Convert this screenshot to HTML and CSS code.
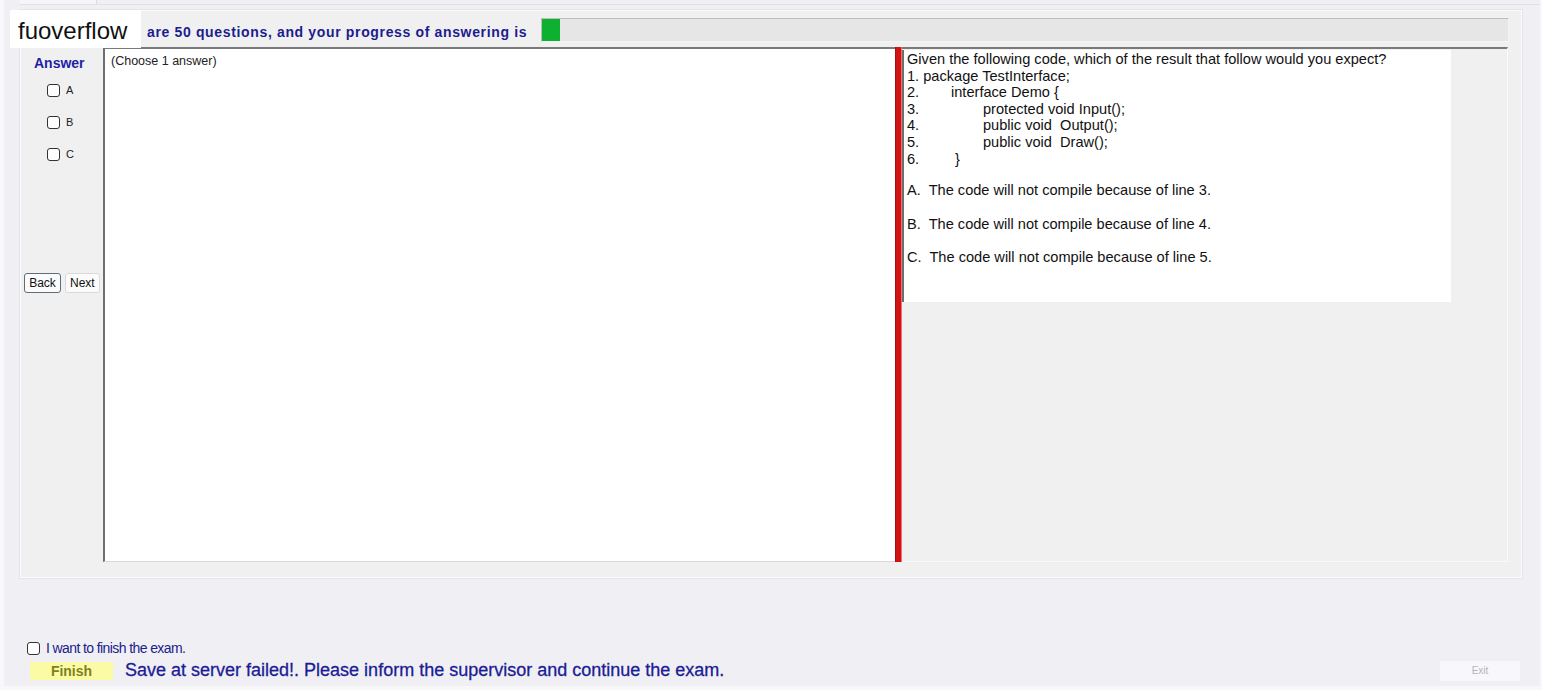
FILE: index.html
```html
<!DOCTYPE html>
<html lang="en">
<head>
  <meta charset="UTF-8" />
  <title>Exam Client</title>
  <link rel="stylesheet" href="styles.css">
</head>
<body>
  <div class="screen">
    <div class="tabstrip"><div class="tab"></div></div>

    <div class="main">
      <div class="header">
        <div class="progress-text">are 50 questions, and your progress of answering is</div>
        <div class="progress"><div class="progress-fill" style="width: 18px"></div></div>
      </div>

      <div class="body">
        <div class="answers">
          <div class="answers-title">Answer</div>
          <label class="opt"><span class="box"></span>A</label>
          <label class="opt"><span class="box"></span>B</label>
          <label class="opt"><span class="box"></span>C</label>
          <div class="nav">
            <button class="btn btn-focus">Back</button>
            <button class="btn">Next</button>
          </div>
        </div>

        <div class="question">(Choose 1 answer)</div>

        <div class="splitter"></div>

        <div class="content">
          <div class="qbox">
            <div>Given the following code, which of the result that follow would you expect?</div>
            <div>1. package TestInterface;</div>
            <div class="code"><span class="ln">2.</span><span class="ind1">interface Demo {</span></div>
            <div class="code"><span class="ln">3.</span><span class="ind2">protected void Input();</span></div>
            <div class="code"><span class="ln">4.</span><span class="ind2">public void&nbsp; Output();</span></div>
            <div class="code"><span class="ln">5.</span><span class="ind2">public void&nbsp; Draw();</span></div>
            <div class="code"><span class="ln">6.</span><span class="ind3">}</span></div>
            <p class="choice">A.&nbsp; The code will not compile because of line 3.</p>
            <p class="choice">B.&nbsp; The code will not compile because of line 4.</p>
            <p class="choice">C.&nbsp; The code will not compile because of line 5.</p>
          </div>
        </div>
      </div>
    </div>

    <div class="footer">
      <label class="finish-check"><span class="box"></span>I want to finish the exam.</label>
      <div class="finish-row">
        <button class="finish">Finish</button>
        <div class="message">Save at server failed!. Please inform the supervisor and continue the exam.</div>
        <button class="exit">Exit</button>
      </div>
    </div>

    <div class="watermark">fuoverflow</div>
  </div>
</body>
</html>
```

FILE: styles.css
```css
body {
  margin: 0;
  background: #f8f8fb;
  font-family: "Liberation Sans", Arial, sans-serif;
}
.screen {
  position: relative;
  margin-left: 4px;
  width: 1536px;
  height: 686px;
  background: #f0f0f4;
}
.tabstrip {
  height: 4px;
  display: flex;
  border-bottom: 1px solid #e2e2e6;
  margin-left: 16px;
}
.tab {
  width: 76px;
  background: #f6f6f8;
  border-right: 1px solid #dcdcdc;
}
.watermark {
  position: absolute;
  left: 6px;
  top: 10px;
  width: 123px;
  height: 38px;
  padding-left: 8px;
  background: #fff;
  color: #111;
  font-size: 24px;
  line-height: 42px;
}
.main {
  margin: 5px 0 0 16px;
  width: 1500px;
  height: 566px;
  background: #f0f0f0;
  border: 1px solid #fcfcfc;
  box-shadow: 0 0 0 1px #e4e4e8;
}
.header {
  height: 36px;
  display: flex;
  align-items: center;
  padding-left: 126px;
  padding-right: 12px;
}
.progress-text {
  font-size: 14px;
  letter-spacing: 0.65px;
  font-weight: bold;
  color: #1c1c8e;
  white-space: nowrap;
  padding-top: 5px;
}
.progress {
  flex: 1;
  height: 22px;
  margin-left: 14px;
  margin-top: 1px;
  background: #e6e6e6;
  border: 1px solid #bdbdbd;
  border-right-color: #f4f4f4;
  border-bottom-color: #f4f4f4;
}
.progress-fill {
  height: 100%;
  background: #0db02f;
}
.body {
  display: flex;
  height: 515px;
}
.answers {
  width: 82px;
  display: flex;
  flex-direction: column;
}
.answers-title {
  margin-top: 8px;
  padding-left: 13px;
  font-size: 14px;
  font-weight: bold;
  color: #1f1fa6;
}
.opt {
  display: flex;
  align-items: center;
  gap: 6px;
  margin-left: 26px;
  height: 16px;
  margin-top: 16px;
  font-size: 11px;
  color: #222;
}
.opt:first-of-type {
  margin-top: 11px;
}
.box {
  display: inline-block;
  width: 11px;
  height: 11px;
  border: 1px solid #333;
  border-radius: 3px;
  background: #fff;
}
.nav {
  display: flex;
  gap: 4px;
  margin-top: 111px;
  margin-left: 3px;
}
.btn {
  height: 20px;
  padding: 0 4px;
  font-family: "Liberation Sans", Arial, sans-serif;
  font-size: 12px;
  color: #111;
  background: #fbfbfb;
  border: 1px solid #dadada;
  border-radius: 3px;
}
.btn-focus {
  border-color: #5f6d78;
  width: 37px;
}
.question {
  width: 792px;
  box-sizing: border-box;
  background: #fff;
  border-left: 2px solid #6e6e6e;
  border-top: 2px solid #7a7a7a;
  border-bottom: 1px solid #d8d8d8;
  padding: 5px 0 0 6px;
  font-size: 12.5px;
  color: #222;
}
.splitter {
  width: 5px;
  background: #d01414;
  border-left: 1px solid #a80f0f;
  border-right: 1px solid #f07070;
}
.content {
  flex: 1;
  margin-right: 13px;
  border-top: 2px solid #7a7a7a;
  border-right: 1px solid #fafafa;
  border-bottom: 1px solid #fafafa;
}
.qbox {
  width: 544px;
  height: 251px;
  margin-top: 1px;
  padding: 1px 0 0 3px;
  background: #fff;
  border-left: 2px solid #6e6e6e;
  font-size: 14.6px;
  line-height: 16.6px;
  color: #111;
}
.code {
  display: flex;
}
.ln {
  width: 44px;
}
.ind2 {
  padding-left: 32px;
}
.ind3 {
  padding-left: 4px;
}
.choice {
  margin: 17px 0 0;
}
.code + .choice {
  margin-top: 15px;
}
.footer {
  padding: 62px 0 0 23px;
}
.finish-check {
  display: flex;
  align-items: center;
  gap: 6px;
  font-size: 14px;
  letter-spacing: -0.6px;
  color: #20208c;
}
.finish-row {
  display: flex;
  align-items: center;
  margin-top: 4px;
  margin-left: 3px;
}
.finish {
  width: 83px;
  height: 18px;
  border: none;
  background: #fbfba6;
  color: #7f8020;
  font-family: "Liberation Sans", Arial, sans-serif;
  font-size: 14px;
  font-weight: bold;
  padding: 0;
}
.message {
  margin-left: 12px;
  font-size: 18px;
  color: #1c1c96;
  -webkit-text-stroke: 0.3px #1c1c96;
}
.exit {
  margin-left: auto;
  margin-right: 20px;
  width: 80px;
  height: 20px;
  border: none;
  background: #f8f8fc;
  color: #b4b4b4;
  font-family: "Liberation Sans", Arial, sans-serif;
  font-size: 10px;
}
```
